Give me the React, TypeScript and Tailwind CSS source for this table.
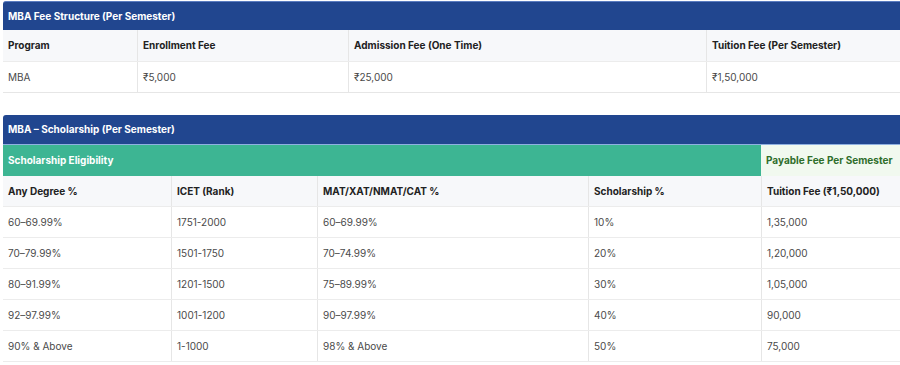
const feeHead = ['Program', 'Enrollment Fee', 'Admission Fee (One Time)', 'Tuition Fee (Per Semester)'];
const feeRow = ['MBA', '₹5,000', '₹25,000', '₹1,50,000'];

const schHead = ['Any Degree %', 'ICET (Rank)', 'MAT/XAT/NMAT/CAT %', 'Scholarship %', 'Tuition Fee (₹1,50,000)'];
const schRows = [
  ['60–69.99%', '1751-2000', '60–69.99%', '10%', '1,35,000'],
  ['70–79.99%', '1501-1750', '70–74.99%', '20%', '1,20,000'],
  ['80–91.99%', '1201-1500', '75–89.99%', '30%', '1,05,000'],
  ['92–97.99%', '1001-1200', '90–97.99%', '40%', '90,000'],
  ['90% & Above', '1-1000', '98% & Above', '50%', '75,000'],
];

const feeCols = 'grid grid-cols-[134px_211px_358px_1fr]';
const schCols = 'grid grid-cols-[168px_146px_271px_173px_1fr]';

function App() {
  return (
    <div
      className="w-[900px] h-[365px] overflow-hidden bg-white text-[#2b2b2b]"
      style={{ fontFamily: 'Inter, "Noto Sans", sans-serif' }}
    >
      <div className="w-[920px] ml-[3px] pt-[1px]">
        {/* FEE STRUCTURE */}
        <div className="border-b border-[#e6e6e6]">
          <div className="h-[29px] bg-[#21468f] rounded-tl-[3px] flex items-center px-[5px] text-white text-[10px] font-bold border-t border-[#5a7cc0]">
            MBA Fee Structure (Per Semester)
          </div>
          <div className={`${feeCols} h-[32px] bg-[#f7f8fa] border-b border-[#ececec]`}>
            {feeHead.map((h, i) => (
              <div key={h} className={`flex items-center px-[5px] text-[10px] font-bold text-[#222] ${i > 0 ? 'border-l border-[#e6e6e6]' : ''}`}>
                {h}
              </div>
            ))}
          </div>
          <div className={`${feeCols} h-[30px]`}>
            {feeRow.map((c, i) => (
              <div key={i} className={`flex items-center px-[5px] text-[10px] text-[#4a4a4a] ${i > 0 ? 'border-l border-[#e6e6e6]' : ''}`}>
                {c}
              </div>
            ))}
          </div>
        </div>

        {/* SCHOLARSHIP */}
        <div className="mt-[22px]">
          <div className="h-[30px] bg-[#21468f] rounded-tl-[3px] flex items-center px-[5px] text-white text-[10px] font-bold border-b border-[#8fb0e0]">
            MBA – Scholarship (Per Semester)
          </div>
          <div className="grid grid-cols-[758px_1fr] h-[31px]">
            <div className="bg-[#3db593] flex items-center px-[5px] text-white text-[10px] font-bold">
              Scholarship Eligibility
            </div>
            <div className="bg-[#f1f9ef] flex items-center px-[5px] text-[#2f6e2b] text-[10px] font-bold">
              Payable Fee Per Semester
            </div>
          </div>
          <div className={`${schCols} h-[31px] bg-[#f7f8fa] border-b border-[#ececec]`}>
            {schHead.map((h, i) => (
              <div key={h} className={`flex items-center px-[5px] text-[10px] font-bold text-[#222] ${i > 0 ? 'border-l border-[#e6e6e6]' : ''}`}>
                {h}
              </div>
            ))}
          </div>
          {schRows.map((r, ri) => (
            <div key={ri} className={`${schCols} h-[31px] border-b border-[#ececec]`}>
              {r.map((c, i) => (
                <div key={i} className={`flex items-center px-[5px] text-[10px] text-[#4a4a4a] ${i > 0 ? 'border-l border-[#e6e6e6]' : ''}`}>
                  {c}
                </div>
              ))}
            </div>
          ))}
        </div>
      </div>
    </div>
  );
}

export default App;
